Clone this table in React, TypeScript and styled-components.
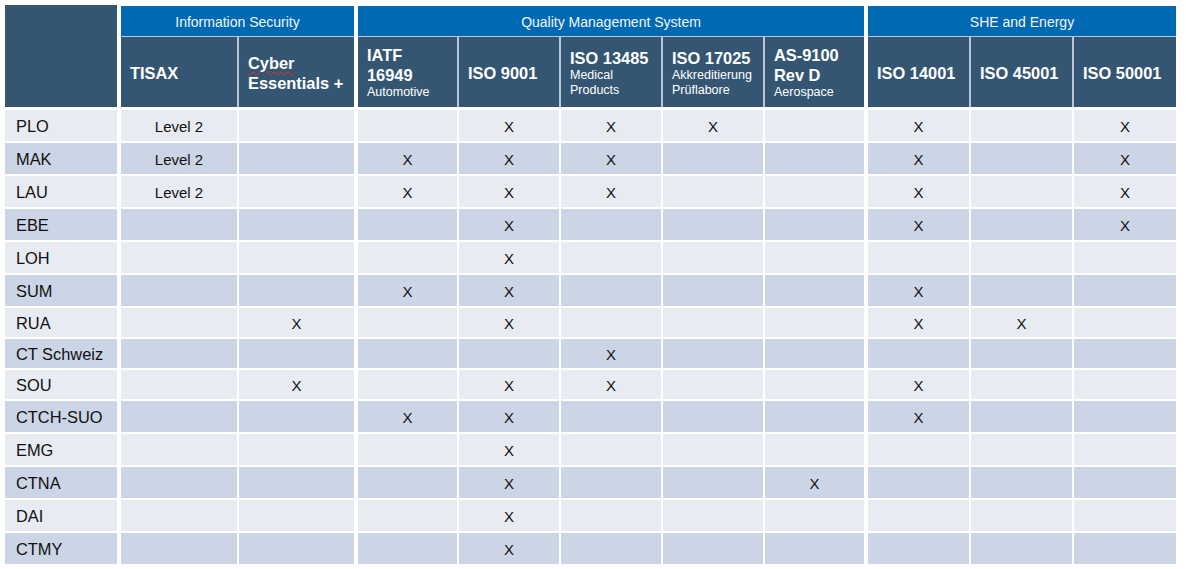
import React from 'react';
import styled, { createGlobalStyle } from 'styled-components';

const GlobalStyle = createGlobalStyle`
  body {
    margin: 0;
    background: #ffffff;
    font-family: "Liberation Sans", Arial, sans-serif;
  }
`;

type Col = { key: string; title: string[]; sub?: string[]; width: number };
type Group = { title: string; cols: Col[] };

const groups: Group[] = [
  {
    title: 'Information Security',
    cols: [
      { key: 'tisax', title: ['TISAX'], width: 116 },
      { key: 'cyber', title: ['Cyber', 'Essentials +'], width: 115 },
    ],
  },
  {
    title: 'Quality Management System',
    cols: [
      { key: 'iatf', title: ['IATF', '16949'], sub: ['Automotive'], width: 99 },
      { key: 'iso9001', title: ['ISO 9001'], width: 100 },
      { key: 'iso13485', title: ['ISO 13485'], sub: ['Medical', 'Products'], width: 100 },
      { key: 'iso17025', title: ['ISO 17025'], sub: ['Akkreditierung', 'Prüflabore'], width: 100 },
      { key: 'as9100', title: ['AS-9100', 'Rev D'], sub: ['Aerospace'], width: 99 },
    ],
  },
  {
    title: 'SHE and Energy',
    cols: [
      { key: 'iso14001', title: ['ISO 14001'], width: 101 },
      { key: 'iso45001', title: ['ISO 45001'], width: 101 },
      { key: 'iso50001', title: ['ISO 50001'], width: 102 },
    ],
  },
];

type Site = { name: string; marks: Record<string, string>; height?: number };

const x = (...keys: string[]) => Object.fromEntries(keys.map((k) => [k, 'X']));

const sites: Site[] = [
  { name: 'PLO', marks: { tisax: 'Level 2', ...x('iso9001', 'iso13485', 'iso17025', 'iso14001', 'iso50001') } },
  { name: 'MAK', marks: { tisax: 'Level 2', ...x('iatf', 'iso9001', 'iso13485', 'iso14001', 'iso50001') } },
  { name: 'LAU', marks: { tisax: 'Level 2', ...x('iatf', 'iso9001', 'iso13485', 'iso14001', 'iso50001') } },
  { name: 'EBE', marks: x('iso9001', 'iso14001', 'iso50001') },
  { name: 'LOH', marks: x('iso9001') },
  { name: 'SUM', marks: x('iatf', 'iso9001', 'iso14001') },
  { name: 'RUA', marks: x('cyber', 'iso9001', 'iso14001', 'iso45001'), height: 29 },
  { name: 'CT Schweiz', marks: x('iso13485'), height: 29 },
  { name: 'SOU', marks: x('cyber', 'iso9001', 'iso13485', 'iso14001'), height: 29 },
  { name: 'CTCH-SUO', marks: x('iatf', 'iso9001', 'iso14001') },
  { name: 'EMG', marks: x('iso9001') },
  { name: 'CTNA', marks: x('iso9001', 'as9100') },
  { name: 'DAI', marks: x('iso9001') },
  { name: 'CTMY', marks: x('iso9001') },
];

const DARK = '#355672';
const BLUE = '#0069b3';
const ROW_LIGHT = '#e8ebf2';
const ROW_DARK = '#ccd5e5';
const LABEL_W = 112;

const Page = styled.div`
  padding: 5px 0 0 5px;
`;

const Table = styled.div`
  display: flex;
  flex-direction: column;
  gap: 2px;
`;

const HeaderRow = styled.div`
  display: flex;
  gap: 4px;
  margin-bottom: 1px;
`;

const Corner = styled.div`
  width: ${LABEL_W}px;
  height: 102px;
  background: ${DARK};
`;

const GroupHead = styled.div`
  display: flex;
  flex-direction: column;
  gap: 1px;
  margin-top: 1px;
  background: #b9c7d6;
`;

const GroupTitle = styled.div`
  height: 30px;
  padding-top: 1px;
  box-sizing: border-box;
  background: ${BLUE};
  color: #f2f6fa;
  font-size: 14px;
  display: flex;
  align-items: center;
  justify-content: center;
`;

const SubRow = styled.div`
  display: flex;
  gap: 2px;
`;

const SubCell = styled.div<{ $w: number }>`
  width: ${(p) => p.$w}px;
  height: 70px;
  box-sizing: border-box;
  padding: 1px 4px 0 9px;
  background: ${DARK};
  color: #ffffff;
  display: flex;
  flex-direction: column;
  justify-content: center;
`;

const SubTitle = styled.div`
  font-size: 16.4px;
  font-weight: bold;
  line-height: 20px;
  white-space: nowrap;
`;

const Misspelled = styled.span`
  text-decoration: underline wavy #e0302c;
  text-decoration-thickness: 1px;
  text-underline-offset: 2px;
`;

const SubNote = styled.div`
  font-size: 12.5px;
  line-height: 15px;
  white-space: nowrap;
`;

const DataRow = styled.div<{ $h: number }>`
  display: flex;
  gap: 4px;
  height: ${(p) => p.$h}px;
`;

const GroupCells = styled.div`
  display: flex;
  gap: 2px;
`;

const Label = styled.div<{ $bg: string }>`
  width: ${LABEL_W}px;
  box-sizing: border-box;
  padding: 1px 0 0 11px;
  background: ${(p) => p.$bg};
  color: #111111;
  font-size: 16.4px;
  display: flex;
  align-items: center;
`;

const Cell = styled.div<{ $w: number; $bg: string }>`
  width: ${(p) => p.$w}px;
  box-sizing: border-box;
  padding-top: 1px;
  background: ${(p) => p.$bg};
  color: #111111;
  font-size: 15px;
  display: flex;
  align-items: center;
  justify-content: center;
`;

const ColHeader: React.FC<{ col: Col }> = ({ col }) => (
  <SubCell $w={col.width}>
    {col.title.map((line, i) =>
      col.key === 'cyber' && i === 0 ? (
        <SubTitle key={line}>
          <Misspelled>{line}</Misspelled>
        </SubTitle>
      ) : (
        <SubTitle key={line}>{line}</SubTitle>
      )
    )}
    {col.sub?.map((s) => (
      <SubNote key={s}>{s}</SubNote>
    ))}
  </SubCell>
);

export default function App() {
  return (
    <Page>
      <GlobalStyle />
      <Table>
        <HeaderRow>
          <Corner />
          {groups.map((g) => (
            <GroupHead key={g.title}>
              <GroupTitle>{g.title}</GroupTitle>
              <SubRow>
                {g.cols.map((c) => (
                  <ColHeader key={c.key} col={c} />
                ))}
              </SubRow>
            </GroupHead>
          ))}
        </HeaderRow>
        {sites.map((site, i) => {
          const bg = i % 2 === 0 ? ROW_LIGHT : ROW_DARK;
          return (
            <DataRow key={site.name} $h={site.height ?? 31}>
              <Label $bg={bg}>{site.name}</Label>
              {groups.map((g) => (
                <GroupCells key={g.title}>
                  {g.cols.map((c) => (
                    <Cell key={c.key} $w={c.width} $bg={bg}>
                      {site.marks[c.key] ?? ''}
                    </Cell>
                  ))}
                </GroupCells>
              ))}
            </DataRow>
          );
        })}
      </Table>
    </Page>
  );
}
